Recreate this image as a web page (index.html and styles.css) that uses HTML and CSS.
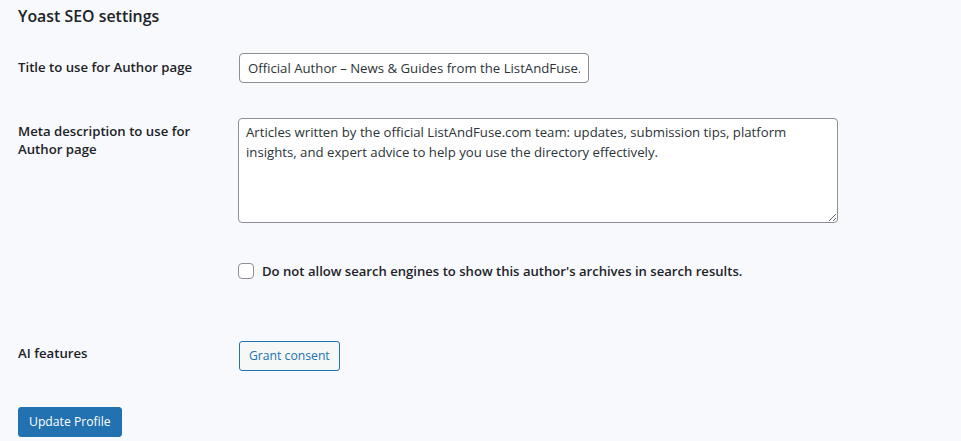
FILE: index.html
```html
<!DOCTYPE html>
<html lang="en">
<head>
<meta charset="utf-8">
<title>Yoast SEO settings</title>
<link rel="stylesheet" href="styles.css">
</head>
<body>
<div class="wrap">
  <h2 class="section-title">Yoast SEO settings</h2>
  <div class="form-table">
    <div class="row row-title">
      <label class="th" for="wpseo_author_title">Title to use for Author page</label>
      <div class="td"><input id="wpseo_author_title" class="regular-text" type="text" value="Official Author – News &amp; Guides from the ListAndFuse.com Team"></div>
    </div>
    <div class="row row-desc">
      <label class="th" for="wpseo_author_metadesc">Meta description to use for Author page</label>
      <div class="td"><textarea id="wpseo_author_metadesc" class="large-text">Articles written by the official ListAndFuse.com team: updates, submission tips, platform insights, and expert advice to help you use the directory effectively.</textarea></div>
    </div>
    <div class="row row-check">
      <div class="th"></div>
      <div class="td"><label class="check"><input type="checkbox" class="checkbox"><span>Do not allow search engines to show this author's archives in search results.</span></label></div>
    </div>
    <div class="row row-ai">
      <div class="th">AI features</div>
      <div class="td"><button class="button-secondary" type="button">Grant consent</button></div>
    </div>
  </div>
  <div class="submit"><button class="button-primary" type="submit">Update Profile</button></div>
</div>
</body>
</html>
```
FILE: styles.css
```css
html, body {
  margin: 0;
  padding: 0;
  background: #f7f9fd;
}
body {
  font-family: "Open Sans", "Noto Sans", sans-serif;
  color: #1d2327;
  font-size: 12.2px;
}
.wrap {
  padding: 5px 0 0 18px;
}
.section-title {
  margin: 0;
  font-size: 15.9px;
  line-height: 22px;
  font-weight: 600;
  color: #1d2327;
}
.form-table {
  display: flex;
  flex-direction: column;
}
.row {
  display: flex;
  align-items: flex-start;
}
.th {
  width: 220px;
  flex: none;
  font-size: 13.2px;
  font-weight: 600;
  line-height: 18px;
  color: #1d2327;
  box-sizing: border-box;
  padding-right: 30px;
}
.td {
  flex: none;
}
.row-title {
  padding-top: 26px;
  height: 45px;
}
.row-title .th { padding-top: 5px; }
.regular-text {
  display: block;
  box-sizing: border-box;
  width: 350px;
  height: 30px;
  margin: 0 0 0 1px;
  padding: 0 8px;
  border: 1px solid #8c8f94;
  border-radius: 4px;
  background: #fff;
  font-family: inherit;
  font-size: 13.2px;
  color: #2c3338;
  outline: none;
}
.row-desc {
  padding-top: 20px;
}
.row-desc .th { padding-top: 4px; }
.large-text {
  display: block;
  box-sizing: border-box;
  width: 600px;
  height: 105px;
  margin: 0;
  padding: 3px 7px;
  border: 1px solid #8c8f94;
  border-radius: 4px;
  background: #fff;
  font-family: inherit;
  font-size: 13.2px;
  line-height: 20px;
  color: #2c3338;
  resize: vertical;
  outline: none;
}
.row-check {
  padding-top: 40px;
}
.check {
  display: flex;
  align-items: center;
  font-size: 13.1px;
  font-weight: 600;
  line-height: 16px;
  color: #1d2327;
}
.checkbox {
  appearance: none;
  -webkit-appearance: none;
  box-sizing: border-box;
  width: 16px;
  height: 16px;
  margin: 0 8px 0 0;
  border: 1px solid #8c8f94;
  border-radius: 4px;
  background: #fff;
}
.row-ai {
  padding-top: 62px;
}
.row-ai .th { padding-top: 3px; }
.button-secondary {
  display: block;
  height: 30px;
  margin: 0 0 0 1px;
  padding: 0 9px;
  border: 1px solid #2271b1;
  border-radius: 3px;
  background: #f6f7f7;
  color: #2271b1;
  font-family: inherit;
  font-size: 12.2px;
  line-height: 28px;
  cursor: pointer;
}
.submit {
  padding-top: 36px;
}
.button-primary {
  display: block;
  height: 30px;
  margin: 0;
  padding: 0 10px;
  border: 1px solid #2271b1;
  border-radius: 3px;
  background: #2271b1;
  color: #fff;
  font-family: inherit;
  font-size: 12.2px;
  line-height: 28px;
  cursor: pointer;
}
```
